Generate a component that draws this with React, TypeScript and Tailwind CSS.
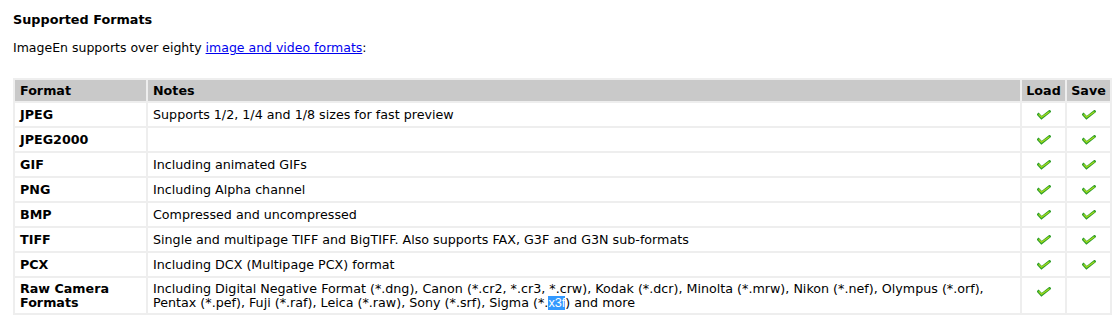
import React from "react";

type Row = {
  format: React.ReactNode;
  notes: React.ReactNode;
  load: boolean;
  save: boolean;
  tall?: boolean;
};

const ROWS: Row[] = [
  { format: "JPEG", notes: "Supports 1/2, 1/4 and 1/8 sizes for fast preview", load: true, save: true },
  { format: "JPEG2000", notes: "", load: true, save: true },
  { format: "GIF", notes: "Including animated GIFs", load: true, save: true },
  { format: "PNG", notes: "Including Alpha channel", load: true, save: true },
  { format: "BMP", notes: "Compressed and uncompressed", load: true, save: true },
  {
    format: "TIFF",
    notes: "Single and multipage TIFF and BigTIFF. Also supports FAX, G3F and G3N sub-formats",
    load: true,
    save: true,
  },
  { format: "PCX", notes: "Including DCX (Multipage PCX) format", load: true, save: true },
  {
    format: (
      <>
        Raw Camera
        <br />
        Formats
      </>
    ),
    notes: (
      <>
        Including Digital Negative Format (*.dng), Canon (*.cr2, *.cr3, *.crw), Kodak (*.dcr), Minolta
        (*.mrw), Nikon (*.nef), Olympus (*.orf),
        <br />
        Pentax (*.pef), Fuji (*.raf), Leica (*.raw), Sony (*.srf), Sigma (*.
        <span className="bg-[#3399ff] text-white font-['Liberation_Sans',sans-serif]">x3f</span>) and more
      </>
    ),
    load: true,
    save: false,
    tall: true,
  },
];

function Check() {
  return (
    <svg width="14" height="10" viewBox="0 0 14 10" className="inline-block">
      <polyline
        points="1.5,4.5 4.5,7.8 12.5,1.5"
        fill="none"
        stroke="#2f9e2a"
        strokeWidth="2.8"
        strokeLinecap="square"
      />
      <polyline
        points="2,4.7 4.5,7.2 12,2"
        fill="none"
        stroke="#a8dd1a"
        strokeWidth="1.1"
        strokeLinecap="square"
      />
    </svg>
  );
}

export default function App() {
  return (
    <div className="bg-white text-black px-[13px] pt-[11px] font-['DejaVu_Sans',Verdana,sans-serif] text-[12.5px] leading-[16px]">
      <h2 className="font-bold text-[12.8px] leading-[18px]">Supported Formats</h2>
      <p className="mt-[11px]">
        ImageEn supports over eighty{" "}
        <a href="#" className="text-[#0000ee] underline">
          image and video formats
        </a>
        :
      </p>

      <table className="mt-[22px] w-[1099px] border-separate border-spacing-[2px] bg-[#eeeeee] leading-[14px] text-[12.7px]">
        <thead>
          <tr className="bg-[#c9c9c9] font-bold">
            <th className="w-[131px] h-[21px] px-[5px] text-left align-middle">Format</th>
            <th className="px-[5px] text-left align-middle">Notes</th>
            <th className="w-[43px] px-[4px] text-center align-middle">Load</th>
            <th className="w-[43px] px-[4px] text-center align-middle">Save</th>
          </tr>
        </thead>
        <tbody>
          {ROWS.map((r, i) => (
            <tr key={i} className="bg-white">
              <td
                className={`px-[5px] font-bold align-middle ${r.tall ? "h-[35px] pt-[1px]" : "h-[23px]"}`}
              >
                {r.format}
              </td>
              <td className="px-[5px] align-middle">{r.notes}</td>
              <td className={`text-center ${r.tall ? "align-top pt-[6px]" : "align-middle"}`}>
                {r.load && <Check />}
              </td>
              <td className="text-center align-middle">{r.save && <Check />}</td>
            </tr>
          ))}
        </tbody>
      </table>
    </div>
  );
}
